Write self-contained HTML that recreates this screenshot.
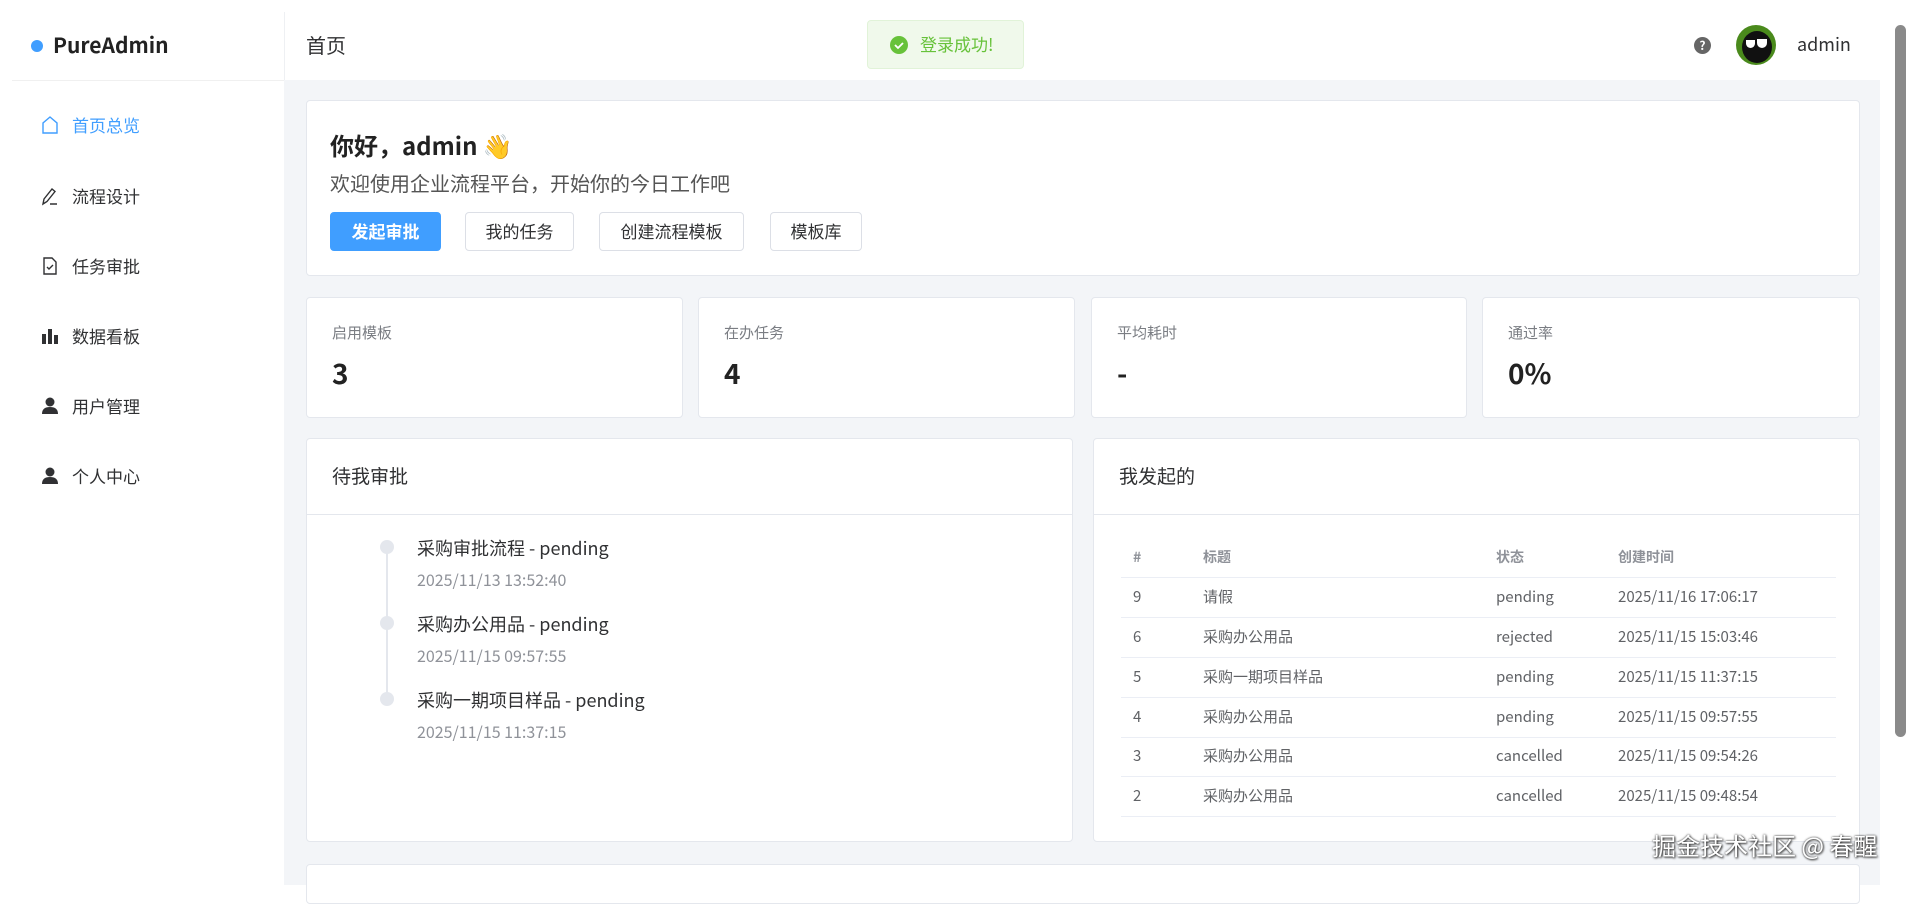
<!DOCTYPE html>
<html><head><meta charset="utf-8"><style>
*{box-sizing:border-box;margin:0;padding:0}
body{width:1910px;height:885px;overflow:hidden;background:#fff;font-family:"Noto Sans CJK SC","Liberation Sans",sans-serif;color:#303133;position:relative;line-height:1.3}
.abs{position:absolute}
.main{position:absolute;left:284px;top:80px;width:1596px;height:805px;background:#f3f5f8}
.card{position:absolute;background:#fff;border:1px solid #e4e7ed;border-radius:4px}
.mi{position:absolute;left:40px;font-size:17px;color:#303133;display:flex;align-items:center;height:24px}
.mi svg{width:20px;height:20px;margin-right:12px}
.btn{position:absolute;top:212px;height:39px;border:1px solid #dcdfe6;border-radius:4px;font-size:17px;display:flex;align-items:center;justify-content:center;color:#303133;background:#fff}
.lbl{position:absolute;left:25px;top:25px;font-size:15px;color:#7a7d83}
.val{position:absolute;left:25px;top:57px;font-size:28px;font-weight:bold;color:#222}
.tl{position:absolute;left:417px;font-size:18px;color:#303133}
.td{position:absolute;left:417px;font-size:16px;color:#8f9299}
.row{position:absolute;left:1121px;width:715px;height:40px;border-bottom:1px solid #ebeef5;font-size:15px;color:#606266}
.row span{position:absolute;top:9px;line-height:20px}
</style></head><body>
<div class="abs" style="left:31px;top:40px;width:12px;height:12px;border-radius:50%;background:#409eff"></div>
<div class="abs" style="left:53px;top:32px;font-size:21px;font-weight:bold;color:#222">PureAdmin</div>
<div class="abs" style="left:12px;top:80px;width:272px;height:1px;background:#f0f0f0"></div>
<div class="abs" style="left:284px;top:12px;width:1px;height:68px;background:#eef0f3"></div>
<div class="mi" style="top:113px;color:#409eff"><svg viewBox="0 0 20 20" fill="none" stroke="#409eff" stroke-width="1.4"><path d="M3 18V8l7-6 7 6v10z"/></svg>首页总览</div>
<div class="mi" style="top:184px"><svg viewBox="0 0 20 20" fill="none" stroke="#303133" stroke-width="1.4"><path d="M3 18l1-5 8-10 3 2.5-8 10zM10 18h7"/></svg>流程设计</div>
<div class="mi" style="top:254px"><svg viewBox="0 0 20 20" fill="none" stroke="#303133" stroke-width="1.4"><path d="M4 2h8l4 4v12H4zM7 11l2 2 4-4"/></svg>任务审批</div>
<div class="mi" style="top:324px"><svg viewBox="0 0 20 20" fill="#303133"><rect x="2" y="8" width="4" height="10"/><rect x="8" y="3" width="4" height="15"/><rect x="14" y="9" width="4" height="9"/></svg>数据看板</div>
<div class="mi" style="top:394px"><svg viewBox="0 0 20 20" fill="#303133"><circle cx="10" cy="6" r="4.5"/><path d="M2 18c0-5 3-7 8-7s8 2 8 7z"/></svg>用户管理</div>
<div class="mi" style="top:464px"><svg viewBox="0 0 20 20" fill="#303133"><circle cx="10" cy="6" r="4.5"/><path d="M2 18c0-5 3-7 8-7s8 2 8 7z"/></svg>个人中心</div>
<div class="abs" style="left:306px;top:32px;font-size:20px">首页</div>
<div class="abs" style="left:867px;top:20px;width:157px;height:49px;background:#f0f9eb;border:1px solid #e1f3d8;border-radius:4px;display:flex;align-items:center;padding-left:22px;color:#67c23a;font-size:17px"><svg width="18" height="18" viewBox="0 0 18 18" style="margin-right:12px"><circle cx="9" cy="9" r="9" fill="#67c23a"/><path d="M5 9l3 3 5-5" stroke="#fff" stroke-width="1.8" fill="none"/></svg>登录成功!</div>
<div class="abs" style="left:1694px;top:37px;width:17px;height:17px;border-radius:50%;background:#666;color:#fff;font-size:12px;font-weight:bold;text-align:center;line-height:17px">?</div>
<div class="abs" style="left:1736px;top:25px;width:40px;height:40px;border-radius:50%;background:#4a8a1c;overflow:hidden"><div style="position:absolute;left:6px;top:6px;width:30px;height:32px;border-radius:50%;background:#111"></div><div style="position:absolute;left:10px;top:15px;width:9px;height:8px;border-radius:0 0 6px 6px;background:#fff"></div><div style="position:absolute;left:21px;top:14px;width:10px;height:9px;border-radius:0 0 6px 6px;background:#fff"></div></div>
<div class="abs" style="left:1797px;top:33px;font-size:18px">admin</div>
<div class="main"></div>
<div class="abs" style="left:1880px;top:0;width:30px;height:885px;background:#fff"></div>
<div class="abs" style="left:1895px;top:25px;width:11px;height:712px;border-radius:6px;background:#8a8a8a"></div>
<div class="card" style="left:306px;top:100px;width:1554px;height:176px"></div>
<div class="abs" style="left:330px;top:129px;font-size:24px;font-weight:bold;color:#222">你好，admin 👋</div>
<div class="abs" style="left:330px;top:170px;font-size:20px;color:#555">欢迎使用企业流程平台，开始你的今日工作吧</div>
<div class="btn" style="left:330px;width:111px;background:#409eff;border-color:#409eff;color:#fff;font-weight:bold">发起审批</div>
<div class="btn" style="left:465px;width:109px">我的任务</div>
<div class="btn" style="left:599px;width:145px">创建流程模板</div>
<div class="btn" style="left:770px;width:92px">模板库</div>
<div class="card" style="left:306px;top:297px;width:377px;height:121px"><div class="lbl">启用模板</div><div class="val">3</div></div>
<div class="card" style="left:698px;top:297px;width:377px;height:121px"><div class="lbl">在办任务</div><div class="val">4</div></div>
<div class="card" style="left:1091px;top:297px;width:376px;height:121px"><div class="lbl">平均耗时</div><div class="val">-</div></div>
<div class="card" style="left:1482px;top:297px;width:378px;height:121px"><div class="lbl">通过率</div><div class="val">0%</div></div>
<div class="card" style="left:306px;top:438px;width:767px;height:404px"><div style="position:absolute;left:0;right:0;top:75px;height:1px;background:#e4e7ed"></div><div style="position:absolute;left:25px;top:25px;font-size:19px">待我审批</div></div>
<div class="card" style="left:1093px;top:438px;width:767px;height:404px"><div style="position:absolute;left:0;right:0;top:75px;height:1px;background:#e4e7ed"></div><div style="position:absolute;left:25px;top:25px;font-size:19px">我发起的</div></div>
<div class="abs" style="left:386px;top:547px;width:2px;height:151px;background:#e4e7ed"></div>
<div class="abs" style="left:380px;top:540px;width:14px;height:14px;border-radius:50%;background:#e4e7ed"></div>
<div class="abs" style="left:380px;top:616px;width:14px;height:14px;border-radius:50%;background:#e4e7ed"></div>
<div class="abs" style="left:380px;top:692px;width:14px;height:14px;border-radius:50%;background:#e4e7ed"></div>
<div class="tl" style="top:537px">采购审批流程 - pending</div><div class="td" style="top:569px">2025/11/13 13:52:40</div>
<div class="tl" style="top:613px">采购办公用品 - pending</div><div class="td" style="top:645px">2025/11/15 09:57:55</div>
<div class="tl" style="top:689px">采购一期项目样品 - pending</div><div class="td" style="top:721px">2025/11/15 11:37:15</div>
<div class="row" style="top:538px;font-size:14px;color:#8f9299;font-weight:bold"><span style="left:12px">#</span><span style="left:82px">标题</span><span style="left:375px">状态</span><span style="left:497px">创建时间</span></div>
<div class="row" style="top:578px"><span style="left:12px">9</span><span style="left:82px">请假</span><span style="left:375px">pending</span><span style="left:497px">2025/11/16 17:06:17</span></div>
<div class="row" style="top:618px"><span style="left:12px">6</span><span style="left:82px">采购办公用品</span><span style="left:375px">rejected</span><span style="left:497px">2025/11/15 15:03:46</span></div>
<div class="row" style="top:658px"><span style="left:12px">5</span><span style="left:82px">采购一期项目样品</span><span style="left:375px">pending</span><span style="left:497px">2025/11/15 11:37:15</span></div>
<div class="row" style="top:698px"><span style="left:12px">4</span><span style="left:82px">采购办公用品</span><span style="left:375px">pending</span><span style="left:497px">2025/11/15 09:57:55</span></div>
<div class="row" style="top:737px"><span style="left:12px">3</span><span style="left:82px">采购办公用品</span><span style="left:375px">cancelled</span><span style="left:497px">2025/11/15 09:54:26</span></div>
<div class="row" style="top:777px"><span style="left:12px">2</span><span style="left:82px">采购办公用品</span><span style="left:375px">cancelled</span><span style="left:497px">2025/11/15 09:48:54</span></div>
<div class="card" style="left:306px;top:864px;width:1554px;height:40px"></div>
<div class="abs" style="left:1652px;top:829px;font-size:24px;color:#fff;text-shadow:0 0 2px #333,1px 1px 2px #333">掘金技术社区 @ 春醒</div>
</body></html>
